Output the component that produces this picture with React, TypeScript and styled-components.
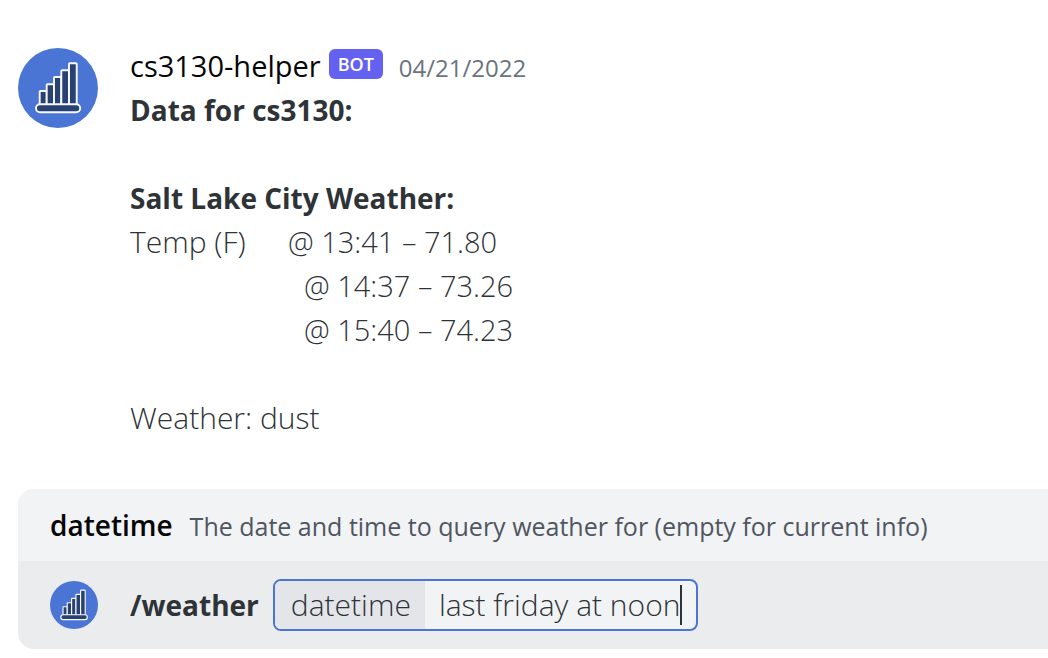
import React from "react";
import styled, { createGlobalStyle } from "styled-components";

const GlobalStyle = createGlobalStyle`
  * { box-sizing: border-box; }
  body {
    margin: 0;
    background: #ffffff;
    color: #2e3338;
    font-family: "Open Sans", "Noto Sans", sans-serif;
    font-size: 28px;
    line-height: 44px;
  }
`;

const Page = styled.main`
  padding: 44px 0 8px 18px;
`;

const Message = styled.article`
  display: flex;
  align-items: flex-start;
  gap: 32px;
`;

const AvatarSvg = styled.svg<{ $size: number }>`
  display: block;
  flex: none;
  width: ${(p) => p.$size}px;
  height: ${(p) => p.$size}px;
`;

const AvatarSlot = styled.div`
  padding-top: 4px;
`;

const Content = styled.div`
  flex: 1;
  min-width: 0;
`;

const Header = styled.header`
  display: flex;
  align-items: center;
  height: 44px;
`;

const Author = styled.span`
  color: #060607;
  font-size: 29px;
`;

const BotTag = styled.span`
  margin: 0 16px 4px 8px;
  padding: 0 9px;
  border-radius: 6px;
  background: #6461f1;
  color: #ffffff;
  font-size: 18px;
  font-weight: 600;
  line-height: 30px;
`;

const Timestamp = styled.time`
  padding-top: 4px;
  color: #6a7480;
  font-size: 24px;
`;

const Title = styled.h2`
  margin: 0;
  font-size: 28px;
  font-weight: 700;
  line-height: 44px;
`;

const Block = styled.section`
  margin-top: 44px;
`;

const Line = styled.p`
  display: flex;
  margin: 0;
  font-size: 30px;
  font-weight: 300;
`;

const Lead = styled.span<{ $width: number }>`
  flex: none;
  width: ${(p) => p.$width}px;
`;

const Reading = styled.span`
  font-size: 29px;
`;

const Composer = styled.form`
  margin: 49px 0 0;
  border-radius: 16px 0 0 16px;
  background: #ebecee;
  overflow: hidden;
`;

const Hint = styled.div`
  display: flex;
  align-items: center;
  gap: 17px;
  height: 72px;
  padding: 0 32px;
  background: #f2f3f5;
`;

const HintName = styled.strong`
  color: #060607;
  font-weight: 600;
`;

const HintText = styled.span`
  padding-top: 2px;
  color: #4f5660;
  font-size: 25px;
  white-space: nowrap;
`;

const CommandRow = styled.div`
  display: flex;
  align-items: center;
  height: 88px;
  padding: 0 32px;
`;

const Command = styled.strong`
  margin: 0 14px 0 32px;
  font-weight: 700;
`;

const Option = styled.div`
  display: flex;
  align-items: stretch;
  height: 52px;
  border: 2px solid #4b75d4;
  border-radius: 8px;
  background: #f2f3f5;
  font-size: 30px;
  font-weight: 300;
  line-height: 48px;
  overflow: hidden;
`;

const OptionLabel = styled.label`
  padding: 0 14px 0 16px;
  background: #e3e5e8;
`;

const OptionInput = styled.input`
  field-sizing: content;
  margin: 0;
  padding: 0 0 0 14px;
  border: 0;
  outline: 0;
  background: transparent;
  color: inherit;
  font: inherit;
  caret-color: transparent;
`;

const Caret = styled.span`
  align-self: center;
  width: 2px;
  height: 40px;
  margin-right: 14px;
  background: #2e3338;
`;

const bars = [
  { x: 21.7, y: 43, width: 7 },
  { x: 28.7, y: 36.3, width: 7.3 },
  { x: 36, y: 29, width: 7.3 },
  { x: 43.3, y: 22.3, width: 7.7 },
  { x: 51, y: 15.3, width: 7.7 },
];

function Avatar({ size }: { size: number }) {
  return (
    <AvatarSvg $size={size} viewBox="0 0 80 80" aria-hidden="true">
      <circle cx="40" cy="40" r="40" fill="#4b75d4" />
      <g fill="#294171" stroke="#f7f9ff" strokeWidth="1.9" strokeLinejoin="round">
        {bars.map((bar) => (
          <rect key={bar.x} x={bar.x} y={bar.y} width={bar.width} height={57 - bar.y} rx="0.8" />
        ))}
        <rect x="18" y="56.3" width="44.2" height="8" rx="4" />
      </g>
    </AvatarSvg>
  );
}

const readings = [
  { time: "13:41", temp: "71.80" },
  { time: "14:37", temp: "73.26" },
  { time: "15:40", temp: "74.23" },
];

export default function App() {
  return (
    <>
      <GlobalStyle />
      <Page>
        <Message>
          <AvatarSlot>
            <Avatar size={80} />
          </AvatarSlot>
          <Content>
            <Header>
              <Author>cs3130-helper</Author>
              <BotTag>BOT</BotTag>
              <Timestamp dateTime="2022-04-21">04/21/2022</Timestamp>
            </Header>
            <Title>Data for cs3130:</Title>
            <Block>
              <Title>Salt Lake City Weather:</Title>
              {readings.map((r, i) => (
                <Line key={r.time}>
                  <Lead $width={i === 0 ? 158 : 174}>{i === 0 ? "Temp (F)" : ""}</Lead>
                  <Reading>{`@ ${r.time} – ${r.temp}`}</Reading>
                </Line>
              ))}
            </Block>
            <Block>
              <Line>Weather: dust</Line>
            </Block>
          </Content>
        </Message>
        <Composer onSubmit={(e) => e.preventDefault()}>
          <Hint>
            <HintName>datetime</HintName>
            <HintText>The date and time to query weather for (empty for current info)</HintText>
          </Hint>
          <CommandRow>
            <Avatar size={48} />
            <Command>/weather</Command>
            <Option>
              <OptionLabel htmlFor="datetime">datetime</OptionLabel>
              <OptionInput id="datetime" type="text" defaultValue="last friday at noon" />
              <Caret />
            </Option>
          </CommandRow>
        </Composer>
      </Page>
    </>
  );
}
